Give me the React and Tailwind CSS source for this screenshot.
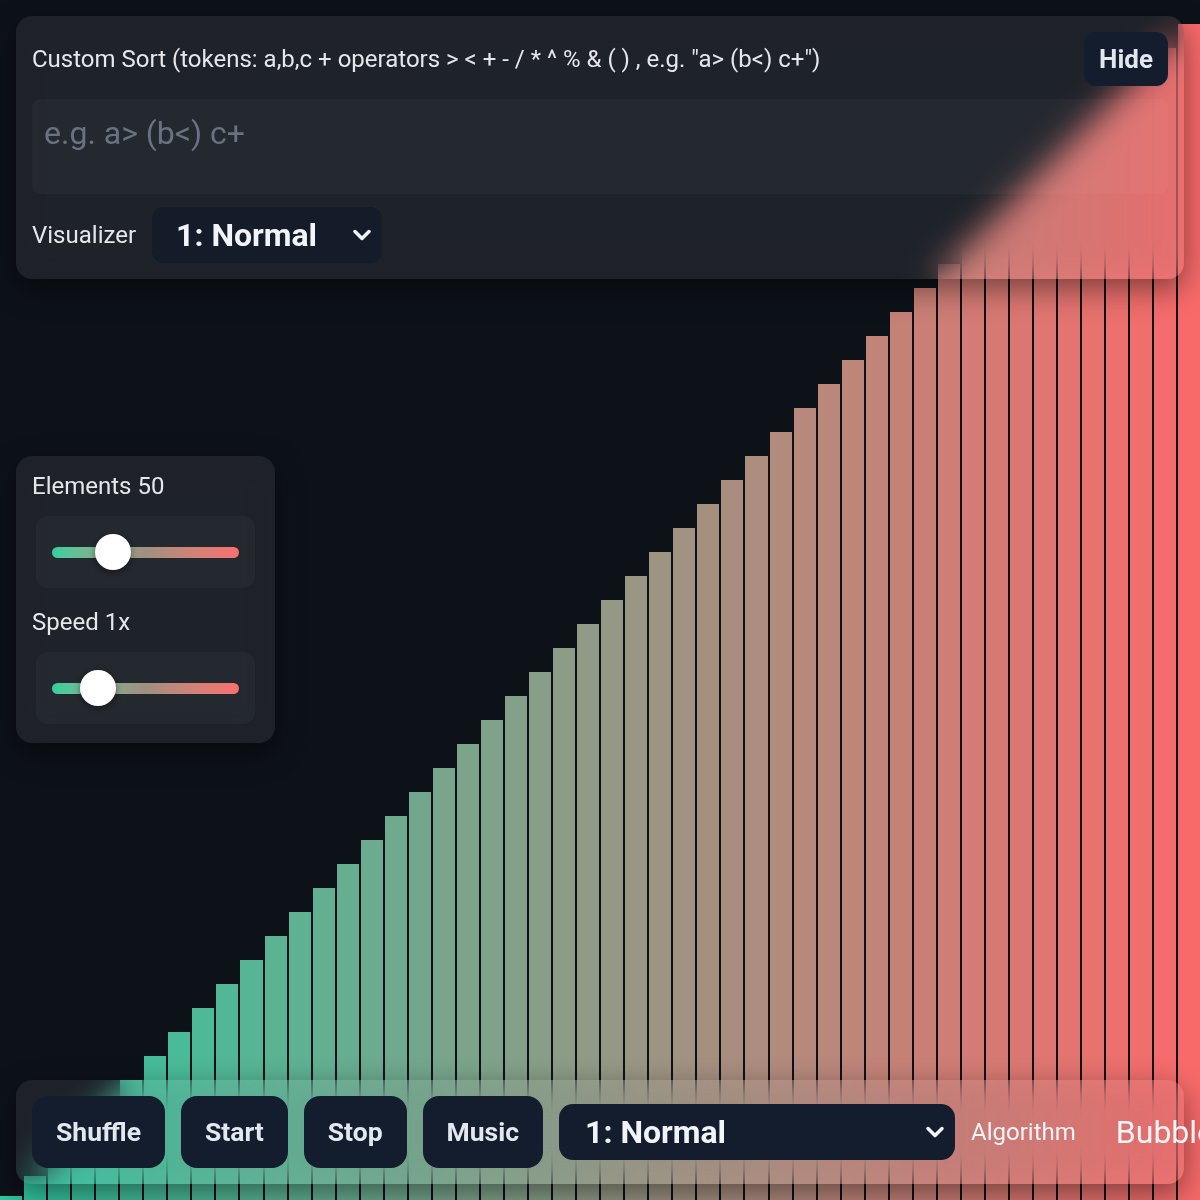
import React from 'react';
import { ChevronDown } from 'lucide-react';

const BAR_COUNT = 50;
const FROM = [45, 200, 160];
const TO = [248, 106, 106];

const barColor = (i) => {
  const t = i / (BAR_COUNT - 1);
  const c = FROM.map((f, k) => Math.round(f + (TO[k] - f) * t));
  return `rgb(${c[0]}, ${c[1]}, ${c[2]})`;
};

const Bars = () => (
  <div className="flex h-[1200px] w-[1200px] items-end gap-[2px]">
    {Array.from({ length: BAR_COUNT }, (_, i) => (
      <div
        key={i}
        className="flex-1"
        style={{ height: i === 0 ? 4 : i * 24, backgroundColor: barColor(i) }}
      />
    ))}
  </div>
);

const Slider = ({ value, min, max }) => {
  const pct = (value - min) / (max - min);
  return (
    <div className="mx-1 flex h-[72px] items-center rounded-xl bg-white/[0.03] px-4">
      <div className="relative h-[11px] w-full rounded-full bg-gradient-to-r from-[#2fcf9f] via-[#a08f80] to-[#f86f6f]">
        <div
          className="absolute top-1/2 h-9 w-9 -translate-y-1/2 rounded-full bg-white shadow-[0_2px_6px_rgba(0,0,0,0.45)]"
          style={{ left: `calc(${pct} * (100% - 36px))` }}
        />
      </div>
    </div>
  );
};

const Button = ({ children }) => (
  <button className="h-[72px] shrink-0 rounded-2xl bg-[#141d2e] px-6 text-[26.5px] font-bold text-slate-200">
    {children}
  </button>
);

export default function App() {
  return (
    <div className="relative h-[1200px] w-[1200px] overflow-hidden bg-[#0d1219] font-['Roboto',sans-serif]">
      <Bars />

      {/* custom sort panel */}
      <div className="absolute left-4 right-4 top-4 flex flex-col gap-[13px] rounded-2xl bg-white/[0.07] p-4 shadow-[0_10px_30px_rgba(0,0,0,0.45)] backdrop-blur-lg">
        <div className="flex h-[54px] items-center justify-between">
          <span className="text-[24px] text-gray-200">
            Custom Sort (tokens: a,b,c + operators &gt; &lt; + - / * ^ % &amp; ( ) , e.g. "a&gt; (b&lt;) c+")
          </span>
          <button className="h-[54px] rounded-xl bg-[#141d2e] px-[15px] text-[26px] font-bold text-slate-200">
            Hide
          </button>
        </div>
        <textarea
          className="h-[95px] resize-none rounded-lg bg-white/[0.03] px-3 pt-[10px] text-[32px] text-gray-200 outline-none placeholder:text-gray-500"
          placeholder="e.g. a> (b<) c+"
        />
        <div className="flex items-center gap-4">
          <span className="text-[24px] text-gray-200">Visualizer</span>
          <div className="flex h-14 w-[230px] items-center justify-between rounded-xl bg-[#141b29] pl-6 pr-[6px]">
            <span className="text-[32px] font-bold text-slate-100">1: Normal</span>
            <ChevronDown className="h-7 w-7 text-slate-100" strokeWidth={3} />
          </div>
        </div>
      </div>

      {/* size and speed sliders */}
      <div className="absolute left-4 top-[456px] flex w-[259px] flex-col gap-4 rounded-2xl bg-white/[0.07] p-4 pb-[19px] shadow-[0_10px_30px_rgba(0,0,0,0.45)] backdrop-blur-lg">
        <div className="text-[24px] leading-7 text-gray-200">Elements 50</div>
        <Slider value={50} min={10} max={150} />
        <div className="pt-1 text-[24px] leading-7 text-gray-200">Speed 1x</div>
        <Slider value={1} min={0.1} max={5} />
      </div>

      {/* controls */}
      <div className="absolute bottom-4 left-4 right-4 flex items-center gap-4 rounded-2xl bg-white/[0.07] p-4 shadow-[0_10px_30px_rgba(0,0,0,0.45)] backdrop-blur-lg">
        <Button>Shuffle</Button>
        <Button>Start</Button>
        <Button>Stop</Button>
        <Button>Music</Button>
        <div className="flex h-14 w-[396px] shrink-0 items-center justify-between rounded-[14px] bg-[#141d2e] pl-[26px] pr-[6px]">
          <span className="text-[32px] font-bold text-slate-100">1: Normal</span>
          <ChevronDown className="h-7 w-7 text-slate-100" strokeWidth={3} />
        </div>
        <div className="flex shrink-0 items-center gap-10">
          <span className="text-[24px] text-gray-100">Algorithm</span>
          <span className="whitespace-nowrap text-[32px] text-gray-100">Bubble Sort</span>
        </div>
      </div>
    </div>
  );
}
